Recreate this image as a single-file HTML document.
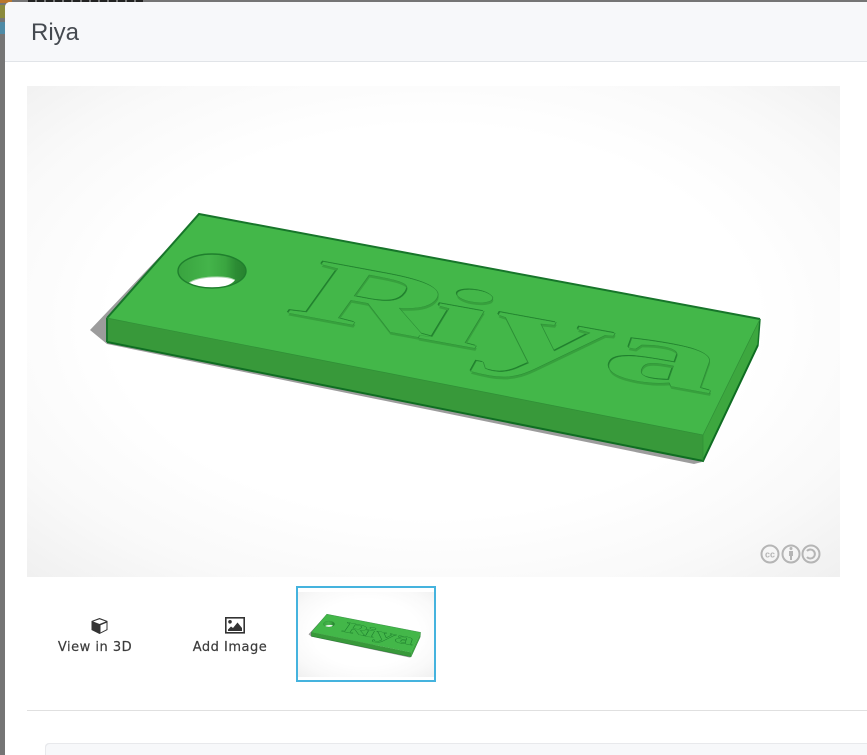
<!DOCTYPE html>
<html><head><meta charset="utf-8"><title>Riya</title>
<style>
html,body{margin:0;padding:0;background:#fff;width:867px;height:755px;overflow:hidden}
#w{position:relative;width:867px;height:755px;overflow:hidden;font-family:"Liberation Sans",sans-serif}
.abs{position:absolute}
.lbl{position:absolute;top:640px;font:13px "DejaVu Sans",sans-serif;letter-spacing:.5px;-webkit-text-stroke:.2px #3c3c3c;color:#3c3c3c;text-align:center;white-space:nowrap}
</style></head><body><div id="w">
<div class="abs" style="left:0;top:0;width:867px;height:755px;background:#757575"></div>
<div class="abs" style="left:28px;top:0;width:115px;height:2px;background:repeating-linear-gradient(90deg,#222 0 7px,#777 7px 9px)"></div>
<div class="abs" style="left:0;top:0;width:12px;height:3px;background:#b9772e"></div>
<div class="abs" style="left:0;top:5px;width:5px;height:13px;background:#8b8a3c"></div>
<div class="abs" style="left:0;top:22px;width:5px;height:12px;background:#4f8ba6"></div>
<div class="abs" style="left:5px;top:2px;width:862px;height:753px;background:#fff;border-radius:5px 0 0 0;overflow:hidden">
  <div style="height:59px;background:#f7f8fa;border-bottom:1px solid #e1e4e8"></div>
</div>
<div class="abs" style="left:31px;top:19px;font-size:24px;line-height:28px;color:#454a50">Riya</div>

<svg class="abs" style="left:27px;top:86px" width="813" height="491" viewBox="27 86 813 491">
  <defs>
    <radialGradient id="bg" cx="50%" cy="48%" r="72%">
      <stop offset="0" stop-color="#fff"/><stop offset=".55" stop-color="#fff"/><stop offset=".8" stop-color="#f9f9f9"/><stop offset="1" stop-color="#f0f0f0"/>
    </radialGradient>
    <linearGradient id="wall" x1="0" x2="1" y1="0" y2="0">
      <stop offset="0" stop-color="#39a33f"/><stop offset=".45" stop-color="#44b44a"/><stop offset=".7" stop-color="#3aa540"/><stop offset=".85" stop-color="#2c8c34"/><stop offset="1" stop-color="#27822f"/>
    </linearGradient>
    <clipPath id="hole"><ellipse cx="212" cy="271" rx="34" ry="17"/></clipPath>
    <g id="plate">
      <g stroke="none">
        <polygon points="184,231 90,330 107,344 694,464 702,462 200,300" fill="#9c9c9c"/>
        <polygon points="107,318 703,435 703,461 107,342" fill="#38993a"/>
        <polygon points="703,435 760,319 758,345 703,461" fill="#3da73f"/>
        <polygon points="199,214 760,319 703,435 107,318" fill="#43b749"/>
      </g>
      <path d="M107,342L703,461L758,345" fill="none" stroke="#0f6d22" stroke-width="2"/>
      <path d="M107,318V342" fill="none" stroke="#17752a" stroke-width="2"/>
      <path d="M107,318L199,214L760,319" fill="none" stroke="#17752a" stroke-width="2"/>
      <path d="M760,319L758,345" fill="none" stroke="#17752a" stroke-width="1.5"/>
      <path d="M107,318L703,435L760,319M703,435V461" fill="none" stroke="#2f8f36" stroke-width=".7"/>
      <ellipse cx="212" cy="271" rx="34" ry="17" fill="url(#wall)" stroke="none"/>
      <path d="M189,283C198,276 226,275 235,280C228,290 198,291 189,283Z" fill="#fff" stroke="none" clip-path="url(#hole)"/>
      <path d="M189,283C198,276 226,275 235,280" fill="none" stroke="#a5d4a7" stroke-width="1"/>
      <ellipse cx="212" cy="271" rx="34" ry="17" fill="none" stroke="#1f7f2d" stroke-width="1.4"/>
      <g font-family="'Liberation Serif',serif" font-weight="bold" font-size="100">
        <g fill="#1f7f2d" stroke="none" transform="translate(-1,-1)">
          <text transform="matrix(2.06 .385 -.56 .78 283 312)">R</text>
          <text transform="matrix(2.35 .43 -.46 .76 413 337)">i</text>
          <text transform="matrix(2.4 .44 -.49 .88 475 352)">y</text>
          <text transform="matrix(2.3 .42 -.3 .85 598 373)">a</text>
        </g>
        <g fill="#37a03d" stroke="none" transform="translate(.5,2.5)">
          <text transform="matrix(2.06 .385 -.56 .78 283 312)">R</text>
          <text transform="matrix(2.35 .43 -.46 .76 413 337)">i</text>
          <text transform="matrix(2.4 .44 -.49 .88 475 352)">y</text>
          <text transform="matrix(2.3 .42 -.3 .85 598 373)">a</text>
        </g>
        <g fill="#43b749" stroke-linejoin="round">
          <text transform="matrix(2.06 .385 -.56 .78 283 312)">R</text>
          <text transform="matrix(2.35 .43 -.46 .76 413 337)">i</text>
          <text transform="matrix(2.4 .44 -.49 .88 475 352)">y</text>
          <text transform="matrix(2.3 .42 -.3 .85 598 373)">a</text>
        </g>
      </g>
    </g>
  </defs>
  <rect x="27" y="86" width="813" height="491" fill="url(#bg)"/>
  <use href="#plate" stroke="#2b8c35" stroke-width=".35"/>
  <g fill="none" stroke="#b5b5b5" stroke-width="2">
    <circle cx="770" cy="554" r="8.5"/><circle cx="791" cy="554" r="8.5"/><circle cx="811" cy="554" r="8.5"/>
    <path d="M807,551A4.5,4.5 0 1 1 807,557" stroke-width="2"/>
  </g>
  <text x="770" y="557.500" text-anchor="middle" font-size="9" font-weight="bold" fill="#b5b5b5">cc</text>
  <rect x="789" y="551" width="4" height="5" fill="#b5b5b5"/><rect x="790" y="555" width="2" height="5" fill="#b5b5b5"/><circle cx="791" cy="548.500" r="1.500" fill="#b5b5b5"/>
</svg>

<svg class="abs" style="left:90px;top:617px" width="19" height="18" viewBox="0 0 19 18">
  <path d="M9.500,1L17.500,4V13L9.500,17L1.500,13V4Z" fill="#333"/>
  <path d="M9.500,2.300L15.800,4.500L9.500,7L3.200,4.500Z" fill="#fff"/>
  <path d="M10.500,8.200L16.500,5.800V12.400L10.500,15.500Z" fill="#fff"/>
</svg>
<div class="lbl" style="left:45px;width:100px">View in 3D</div>

<svg class="abs" style="left:225px;top:617px" width="20" height="17" viewBox="0 0 20 17">
  <rect x=".8" y=".8" width="18.400" height="15" fill="#fff" stroke="#333" stroke-width="1.600"/>
  <circle cx="5" cy="4.800" r="1.800" fill="#333"/>
  <path d="M3,14V12.500L6,9.500L8,11L12.500,5.500L17,11V14Z" fill="#333"/>
</svg>
<div class="lbl" style="left:180px;width:100px">Add Image</div>

<div class="abs" style="left:296px;top:586px;width:136px;height:92px;border:2px solid #45b3de;background:#fff"></div>
<svg class="abs" style="left:298px;top:592px" width="136" height="85" viewBox="27 86 813 491" preserveAspectRatio="none">
  <rect x="27" y="86" width="813" height="491" fill="url(#bg)"/>
  <use href="#plate" stroke="#1a7a2c" stroke-width="1.5"/>
</svg>

<div class="abs" style="left:27px;top:710px;width:840px;height:1px;background:#e0e0e0"></div>
<div class="abs" style="left:45px;top:743px;width:822px;height:12px;background:#f7f8fa;box-shadow:inset 1px 1px 0 #e8e9ec;border-radius:4px 0 0 0"></div>
</div></body></html>
